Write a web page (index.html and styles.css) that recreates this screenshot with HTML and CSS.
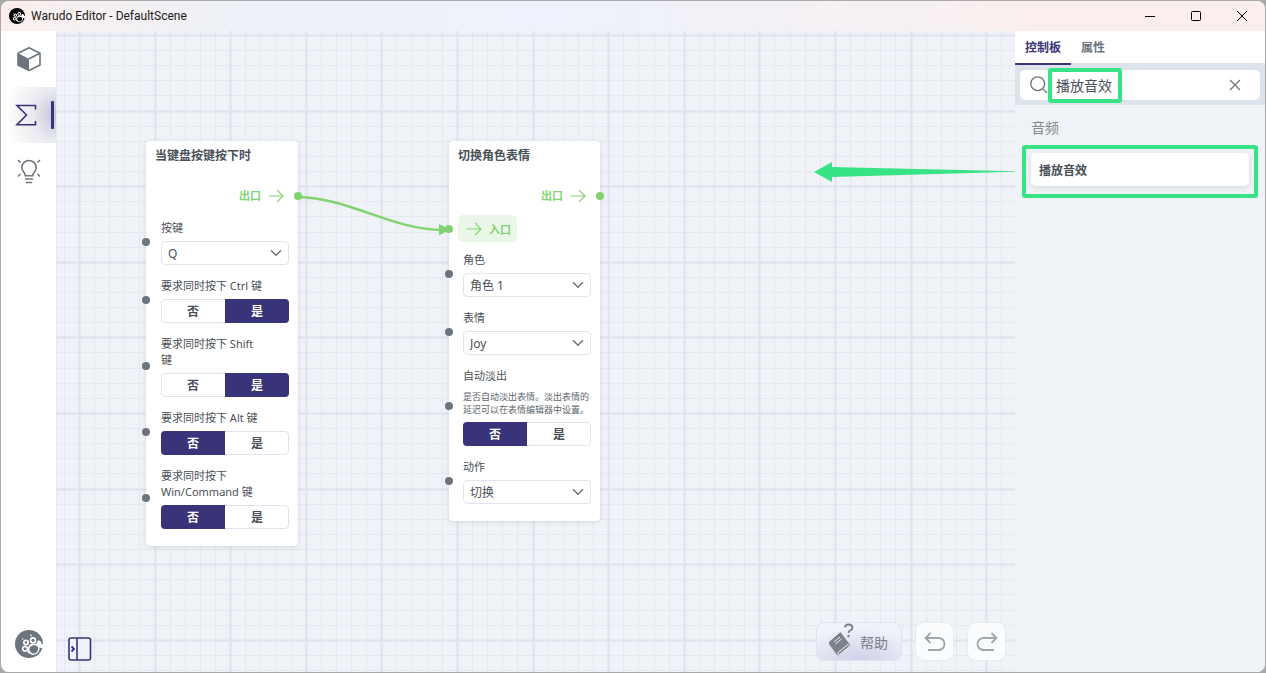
FILE: index.html
```html
<!DOCTYPE html>
<html lang="zh-CN">
<head>
<meta charset="utf-8">
<title>Warudo Editor - DefaultScene</title>
<link rel="stylesheet" href="styles.css">
</head>
<body>
<svg class="defs" aria-hidden="true">
  <symbol id="paw" viewBox="0 0 28 28">
    <circle cx="14" cy="14" r="14" fill="currentColor"/>
    <g fill="var(--paw)">
      <circle cx="11" cy="12.500" r="3"/><circle cx="18" cy="10.300" r="3.200"/>
      <circle cx="10" cy="18.800" r="3.100"/>
      <path d="M13 17.500C14 14.500 18 12 21 14L23 10.500C25 10 26.500 11.500 26.500 13.500L29 15L28 18.500L24.500 17.500C25 21.500 22 25 17.500 25L12.500 22.500Z"/>
      <circle cx="16" cy="5.400" r=".8"/><circle cx="7.800" cy="9" r=".7"/>
    </g>
    <g fill="currentColor">
      <circle cx="11" cy="12.500" r="1.300"/><circle cx="18" cy="10.300" r="1.600"/>
      <circle cx="10" cy="18.800" r="1.500"/>
      <path d="M14.500 18.500C15 15.500 19.500 14 22.500 16.500C24 19.500 22.500 22.500 19.500 23.500C16.500 23.800 14 21.500 14.500 18.500Z"/>
    </g>
  </symbol>
  <symbol id="arrow" viewBox="0 0 16 14"><path d="M0.500 7H15M9 0.800L15 7L9 13.200" fill="none" stroke="currentColor" stroke-width="1.200"/></symbol>
  <symbol id="chevron" viewBox="0 0 12 8"><path d="M1 1.200L6 6.200L11 1.200" fill="none" stroke="currentColor" stroke-width="1.500"/></symbol>
</svg>

<div class="window">
  <header class="titlebar">
    <svg class="titlebar-logo"><use href="#paw"/></svg>
    <h1 class="titlebar-text">Warudo Editor - DefaultScene</h1>
    <div class="window-buttons">
      <button class="window-button" aria-label="最小化"><svg width="12" height="12" viewBox="0 0 12 12"><path d="M1 6.500H11"/></svg></button>
      <button class="window-button" aria-label="最大化"><svg width="12" height="12" viewBox="0 0 12 12"><rect x="1.500" y="1.500" width="9" height="9" rx="1"/></svg></button>
      <button class="window-button" aria-label="关闭"><svg width="12" height="12" viewBox="0 0 12 12"><path d="M1 1L11 11M11 1L1 11"/></svg></button>
    </div>
  </header>

  <div class="workspace">
    <nav class="rail">
      <button class="rail-item" aria-label="资源">
        <svg width="26" height="26" viewBox="0 0 26 26"><path d="M13 1.700L24 7.200V19L13 24.500L2 19V7.200Z" fill="none" stroke="currentColor" stroke-width="1.600" stroke-linejoin="round"/><path d="M2 7.200L13 12.700V24.500L2 19Z" fill="currentColor"/><path d="M13 12.700L24 7.200" stroke="currentColor" stroke-width="1.600"/></svg>
      </button>
      <button class="rail-item rail-item-active" aria-label="蓝图">
        <svg width="26" height="26" viewBox="0 0 26 26"><path d="M20.500 7.500V3.500H2L11.500 13L2 22.700H20.500V19" fill="none" stroke="currentColor" stroke-width="1.600"/></svg>
      </button>
      <button class="rail-item" aria-label="提示">
        <svg width="26" height="26" viewBox="0 0 26 26" fill="none" stroke="currentColor" stroke-width="1.500"><path d="M9.300 17.700C9.300 14.500 5.800 13.500 5.800 9.700A7.200 7.200 0 0 1 20.200 9.700C20.200 13.500 16.700 14.500 16.700 17.700Z"/><path d="M9 21H17M10 24.500H16M2 2L4.500 4.500M24 2L21.500 4.500M2 18.500L4.500 16M24 18.500L21.500 16"/></svg>
      </button>
      <button class="rail-brand" aria-label="Warudo"><svg width="28" height="28"><use href="#paw"/></svg></button>
    </nav>

    <main class="canvas">
      <svg class="canvas-grid" aria-hidden="true">
        <defs>
          <pattern id="grid" x="20" y="2" width="378" height="378" patternUnits="userSpaceOnUse">
            <g transform="translate(2 2)">
              <path class="grid-minor" d="M15.500 -2V376M30.500 -2V376M45.500 -2V376M60.500 -2V376M91.500 -2V376M106.500 -2V376M121.500 -2V376M136.500 -2V376M166.500 -2V376M181.500 -2V376M197.500 -2V376M212.500 -2V376M242.500 -2V376M257.500 -2V376M272.500 -2V376M287.500 -2V376M317.500 -2V376M333.500 -2V376M348.500 -2V376M363.500 -2V376M-2 15.500H376M-2 30.500H376M-2 45.500H376M-2 60.500H376M-2 91.500H376M-2 106.500H376M-2 121.500H376M-2 136.500H376M-2 166.500H376M-2 181.500H376M-2 197.500H376M-2 212.500H376M-2 242.500H376M-2 257.500H376M-2 272.500H376M-2 287.500H376M-2 317.500H376M-2 333.500H376M-2 348.500H376M-2 363.500H376"/>
              <path class="grid-major" d="M.5 -2V376M76.500 -2V376M151.500 -2V376M227.500 -2V376M302.500 -2V376M-2 .5H376M-2 76.500H376M-2 151.500H376M-2 227.500H376M-2 302.500H376"/>
            </g>
          </pattern>
        </defs>
        <rect width="100%" height="100%" fill="url(#grid)"/>
      </svg>

      <section class="node node-keystroke">
        <h2 class="node-title">当键盘按键按下时</h2>
        <div class="flow-out">出口<svg class="flow-arrow"><use href="#arrow"/></svg><i class="port port-out"></i></div>
        <div class="fields">
          <div class="field">
            <i class="port"></i>
            <label class="field-label" for="key">按键</label>
            <div class="select"><select id="key" class="select-box"><option>Q</option></select><svg class="select-chevron"><use href="#chevron"/></svg></div>
          </div>
          <div class="field" role="radiogroup" aria-labelledby="ctrl">
            <i class="port"></i>
            <span class="field-label" id="ctrl">要求同时按下 Ctrl 键</span>
            <div class="toggle"><label class="toggle-option"><input type="radio" name="ctrl">否</label><label class="toggle-option"><input type="radio" name="ctrl" checked>是</label></div>
          </div>
          <div class="field" role="radiogroup" aria-labelledby="shift">
            <i class="port"></i>
            <span class="field-label" id="shift">要求同时按下 Shift 键</span>
            <div class="toggle"><label class="toggle-option"><input type="radio" name="shift">否</label><label class="toggle-option"><input type="radio" name="shift" checked>是</label></div>
          </div>
          <div class="field" role="radiogroup" aria-labelledby="alt">
            <i class="port"></i>
            <span class="field-label" id="alt">要求同时按下 Alt 键</span>
            <div class="toggle"><label class="toggle-option"><input type="radio" name="alt" checked>否</label><label class="toggle-option"><input type="radio" name="alt">是</label></div>
          </div>
          <div class="field" role="radiogroup" aria-labelledby="win">
            <i class="port"></i>
            <span class="field-label" id="win">要求同时按下 Win/Command 键</span>
            <div class="toggle"><label class="toggle-option"><input type="radio" name="win" checked>否</label><label class="toggle-option"><input type="radio" name="win">是</label></div>
          </div>
        </div>
      </section>

      <section class="node node-expression">
        <h2 class="node-title">切换角色表情</h2>
        <div class="flow-out">出口<svg class="flow-arrow"><use href="#arrow"/></svg><i class="port port-out"></i></div>
        <div class="flow-in"><i class="port port-in"></i><button class="flow-in-button"><svg class="flow-arrow"><use href="#arrow"/></svg>入口</button></div>
        <div class="fields">
          <div class="field">
            <i class="port"></i>
            <label class="field-label" for="character">角色</label>
            <div class="select"><select id="character" class="select-box"><option>角色 1</option></select><svg class="select-chevron"><use href="#chevron"/></svg></div>
          </div>
          <div class="field">
            <i class="port"></i>
            <label class="field-label" for="expression">表情</label>
            <div class="select"><select id="expression" class="select-box"><option>Joy</option></select><svg class="select-chevron"><use href="#chevron"/></svg></div>
          </div>
          <div class="field" role="radiogroup" aria-labelledby="fade">
            <i class="port"></i>
            <span class="field-label" id="fade">自动淡出</span>
            <p class="field-hint">是否自动淡出表情。淡出表情的延迟可以在表情编辑器中设置。</p>
            <div class="toggle"><label class="toggle-option"><input type="radio" name="fade" checked>否</label><label class="toggle-option"><input type="radio" name="fade">是</label></div>
          </div>
          <div class="field">
            <i class="port"></i>
            <label class="field-label" for="action">动作</label>
            <div class="select"><select id="action" class="select-box"><option>切换</option></select><svg class="select-chevron"><use href="#chevron"/></svg></div>
          </div>
        </div>
      </section>

      <svg class="edge" width="152" height="48" viewBox="0 0 152 48" aria-hidden="true">
        <path d="M0 9C52 10 94 42 145 42" fill="none" stroke="currentColor" stroke-width="2.400"/>
        <path d="M141 36L152 41.500L141 47.500Z" fill="currentColor"/>
      </svg>

      <svg class="drag-arrow" width="201" height="20" viewBox="0 0 201 20" aria-hidden="true">
        <path d="M0 10L18 0V5L201 9.300V9.800L18 15V20Z" fill="currentColor"/>
      </svg>

      <footer class="canvas-tools">
        <button class="sidebar-button" aria-label="展开侧栏"><svg width="24" height="24" viewBox="0 0 24 24" fill="none" stroke="currentColor" stroke-width="1.600"><rect x="1" y="1" width="21.500" height="22" rx="2"/><path d="M9 1V23"/><path d="M3.500 9.500L6 12L3.500 14.500" stroke-width="1.800"/></svg></button>
        <button class="tool-button help-button">
          <svg width="26" height="34" viewBox="0 0 26 34"><path d="M1 19L12.500 9L22.500 22.500L11 32.500Q8.500 32 7.500 30L1 21Z" fill="currentColor"/><path d="M6 19L12 14M7.500 21L13.500 16M10 29.500L20 21.500L21.500 23.500L11.500 31.500Q9 31.500 10 29.500" fill="none" stroke="#f2f3fa"/><path d="M17 4.500Q17 1.500 20.500 1.500T24.500 4.500Q24.500 6.500 22 7.500Q20.500 8.500 20.500 10" fill="none" stroke="currentColor" stroke-width="1.800"/><circle cx="20.500" cy="13" r="1.200" fill="currentColor"/></svg>
          帮助
        </button>
        <button class="tool-button" aria-label="撤销"><svg width="22" height="20" viewBox="0 0 22 20" fill="none" stroke="currentColor" stroke-width="1.800"><path d="M6.500 1L1.500 6L6.500 11M1.500 6H14.500A6 6 0 0 1 14.500 18H4"/></svg></button>
        <button class="tool-button" aria-label="重做"><svg width="22" height="20" viewBox="0 0 22 20" fill="none" stroke="currentColor" stroke-width="1.800"><path d="M15.500 1L20.500 6L15.500 11M20.500 6H7.500A6 6 0 0 0 7.500 18H18"/></svg></button>
      </footer>
    </main>

    <aside class="panel">
      <div class="tabs" role="tablist">
        <button class="tab tab-active" role="tab" aria-selected="true">控制板</button>
        <button class="tab" role="tab" aria-selected="false">属性</button>
      </div>
      <div class="search">
        <div class="search-box">
          <svg width="18" height="18" viewBox="0 0 18 18" fill="none" stroke="currentColor" stroke-width="1.300"><circle cx="7.700" cy="7.700" r="6.900"/><path d="M12.600 12.600L17 17"/></svg>
          <input class="search-input" type="text" value="播放音效" aria-label="搜索">
          <button class="search-clear" aria-label="清除"><svg width="12" height="12" viewBox="0 0 12 12" stroke="currentColor" stroke-width="1.300"><path d="M1 1L11 11M11 1L1 11"/></svg></button>
          <i class="highlight highlight-search"></i>
        </div>
      </div>
      <section class="results">
        <h2 class="results-title">音频</h2>
        <button class="result-card">播放音效<i class="highlight highlight-card"></i></button>
      </section>
    </aside>
  </div>
</div>
</body>
</html>
```

FILE: styles.css
```css
* { box-sizing: border-box; }

:root {
  --ink: #4a5058;
  --gray: #6c757d;
  --indigo: #39347a;
  --line: #dfe5ee;
  --surface: #eff3f7;
  --flow: #80d370;
  --mark: #37e384;
}

body {
  margin: 0;
  height: 100vh;
  padding: 1px;
  background: #a9a9ab;
  color: var(--ink);
  font-family: "Noto Sans", "Noto Sans CJK SC", sans-serif;
  font-size: 12px;
}

button, select, input { font: inherit; color: inherit; }
button { border: 0; padding: 0; background: none; }
svg { display: block; flex: none; }
h1, h2, p { margin: 0; }
.defs { position: absolute; width: 0; height: 0; }

.window {
  display: flex;
  flex-direction: column;
  height: 100%;
  border-radius: 8px;
  overflow: hidden;
  background: var(--surface);
}

/* Title bar */
.titlebar {
  display: flex;
  align-items: center;
  height: 30px;
  padding: 0 17px 0 8px;
  gap: 6px;
  background: linear-gradient(90deg, #fbefee 0%, #edf2f8 20%, #edf2fc 43%, #f3f1f6 60%, #faefee 82%);
}
.titlebar-logo { width: 16px; height: 16px; color: #000; --paw: #fff; }
.titlebar-text { flex: 1; color: #1a1a1a; font-family: Roboto, sans-serif; font-size: 12px; font-weight: 400; line-height: 18px; }
.window-buttons { display: flex; gap: 34px; }
.window-button svg { fill: none; stroke: #000; }

.workspace { display: flex; flex: 1; min-height: 0; }

/* Left rail */
.rail {
  display: flex;
  flex-direction: column;
  width: 56px;
  background: #fff;
  color: var(--gray);
  border-right: 1px solid #e6e8ef;
}
.rail-item { display: grid; place-items: center; height: 56px; }
.rail-item-active {
  position: relative;
  color: var(--indigo);
  background: radial-gradient(ellipse 50px 56px at 100% 50%, #c3c1d6, #e9e9f0 45%, #f6f6f7 80%, #fff);
}
.rail-item-active svg { margin-right: 2px; }
.rail-item-active::after {
  content: "";
  position: absolute;
  right: 2px;
  top: 14px;
  width: 3px;
  height: 28px;
  border-radius: 1px;
  background: var(--indigo);
}
.rail-brand { display: grid; place-items: center; margin-top: auto; padding-bottom: 14px; --paw: #fff; }

/* Node canvas */
.canvas { position: relative; flex: 1; overflow: hidden; background: var(--surface); }
.canvas-grid { position: absolute; inset: 0; width: 100%; height: 100%; }
.grid-minor { stroke: #e6e8f1; }
.grid-major { stroke: #e1e2ee; stroke-width: 2; }

.node {
  position: absolute;
  top: 110px;
  width: 152px;
  padding: 5px 0 17px;
  border-radius: 4px;
  background: #fff;
  box-shadow: 0 1px 5px rgba(40, 50, 80, .13);
}
.node-keystroke { left: 89px; }
.node-expression { left: 392px; width: 151px; }
.node-title { margin-bottom: 16px; padding: 0 9px; font-size: 12px; font-weight: 700; line-height: 20px; }

.flow-arrow { width: 16px; height: 14px; }
.flow-out {
  position: relative;
  display: flex;
  align-items: center;
  justify-content: flex-end;
  gap: 7px;
  height: 28px;
  padding-right: 14px;
  color: var(--flow);
  font-size: 11px;
  font-weight: 700;
  line-height: 16px;
}
.flow-in { position: relative; margin-top: 5px; padding-left: 9px; color: var(--flow); font-size: 11px; font-weight: 700; }
.flow-in-button {
  display: flex;
  align-items: center;
  gap: 7px;
  height: 27px;
  padding: 0 6px 0 8px;
  border-radius: 5px;
  background: #eaf7e8;
}

.port {
  position: absolute;
  z-index: 2;
  left: -4px;
  top: calc(50% - 5px);
  width: 8px;
  height: 8px;
  border-radius: 50%;
  background: var(--gray);
}
.port-out { left: auto; right: -4px; top: calc(50% - 4px); background: var(--flow); }
.port-in { top: calc(50% - 4px); background: var(--flow); }

.fields { display: flex; flex-direction: column; gap: 13px; margin-top: 10px; }
.field { position: relative; padding: 0 9px 0 15px; }
.node-expression .field { padding-left: 14px; }
.field-label { display: block; margin-bottom: 5px; padding-right: 24px; font-size: 11px; line-height: 16px; }
.field-hint { margin: 6px -2px 6px 0; color: #5d656e; font-size: 9px; line-height: 13px; }

.select { position: relative; }
.select-box {
  display: block;
  width: 100%;
  height: 24px;
  padding: 0 20px 0 6px;
  border: 1px solid var(--line);
  border-radius: 4px;
  background: #fff;
  appearance: none;
}
.select-chevron { position: absolute; right: 7px; top: 8px; width: 12px; height: 8px; color: var(--gray); pointer-events: none; }

.toggle { display: flex; height: 24px; border: 1px solid var(--line); border-radius: 4px; }
.toggle-option {
  flex: 1;
  margin: -1px 0 -1px -1px;
  border-radius: 4px 0 0 4px;
  font-weight: 700;
  line-height: 25px;
  text-align: center;
}
.toggle-option:last-child { margin: -1px -1px -1px 0; border-radius: 0 4px 4px 0; }
.toggle-option:has(:checked) { background: var(--indigo); color: #fff; }
.toggle-option input { position: absolute; margin: 0; appearance: none; }

.edge { position: absolute; left: 241px; top: 157px; color: var(--flow); }
.drag-arrow { position: absolute; right: 0; top: 131px; color: var(--mark); }

.canvas-tools {
  position: absolute;
  left: 11px;
  right: 9px;
  bottom: 11px;
  display: flex;
  align-items: center;
  gap: 13px;
}
.sidebar-button { margin: 14px auto 0 0; color: var(--indigo); background: var(--surface); }
.tool-button {
  display: grid;
  place-items: center;
  width: 39px;
  height: 39px;
  border: 1px solid #e8ebf3;
  border-radius: 9px;
  background: #fbfcfd;
  color: #a0a5aa;
}
.help-button {
  display: flex;
  align-items: center;
  gap: 6px;
  width: 86px;
  padding: 0 11px;
  border-color: #dfe5ee;
  background: radial-gradient(ellipse 60px 32px at 50% 100%, #d0d0ea, #e1e2f2 60%, #f0f2f9);
  color: #7b8189;
  font-size: 14px;
}
.help-button svg { margin-bottom: 4px; }

/* Right panel */
.panel { width: 250px; background: var(--surface); }
.tabs { display: flex; height: 34px; background: linear-gradient(#fff 32px, #dde3ea 32px); }
.tab { padding: 0 10px; border-bottom: 2px solid transparent; color: var(--gray); font-weight: 700; }
.tab-active { color: var(--indigo); border-color: var(--indigo); }
.search { padding: 5px; background: #dde3ea; }
.search-box {
  position: relative;
  display: flex;
  align-items: center;
  gap: 8px;
  height: 30px;
  padding: 0 19px 0 10px;
  border-radius: 5px;
  background: #fff;
  color: var(--gray);
}
.search-input { flex: 1; min-width: 0; padding: 0; border: 0; outline: 0; background: none; color: var(--ink); font-size: 14px; }

.highlight { position: absolute; border: 4px solid var(--mark); border-radius: 3px; pointer-events: none; }
.highlight-search { left: 28px; top: -2px; width: 74px; height: 35px; }
.highlight-card { inset: -8px -9px -12px; }

.results { padding: 13px 16px; }
.results-title { margin-bottom: 15px; color: #84898e; font-size: 14px; font-weight: 400; line-height: 20px; }
.result-card {
  position: relative;
  display: block;
  width: 100%;
  height: 33px;
  padding: 0 8px;
  border-radius: 5px;
  background: #fff;
  box-shadow: 0 2px 5px rgba(40, 50, 80, .12);
  font-weight: 700;
  text-align: left;
}
```
